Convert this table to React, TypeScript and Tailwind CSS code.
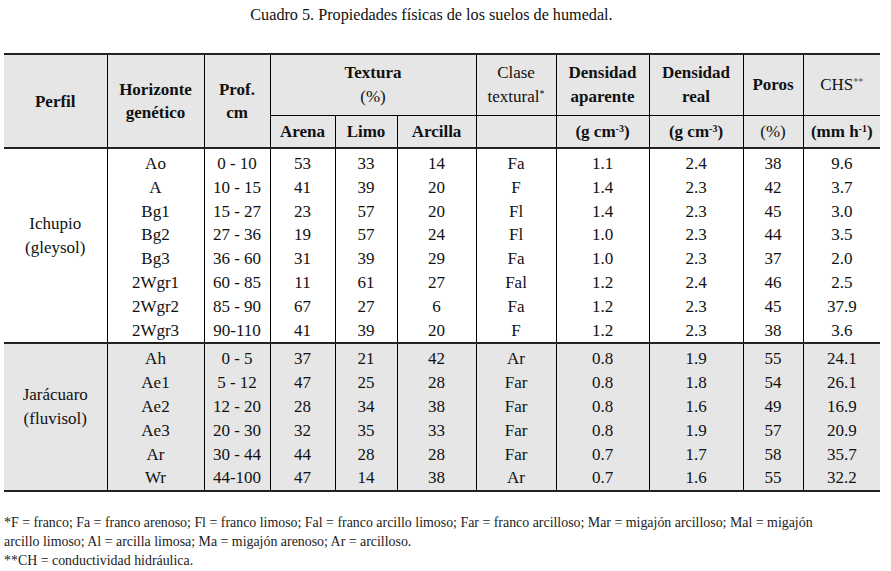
import React from 'react'

type Row = [string, string, string, string, string, string, string, string, string, string]

const ichupio: Row[] = [
  ['Ao', '0 - 10', '53', '33', '14', 'Fa', '1.1', '2.4', '38', '9.6'],
  ['A', '10 - 15', '41', '39', '20', 'F', '1.4', '2.3', '42', '3.7'],
  ['Bg1', '15 - 27', '23', '57', '20', 'Fl', '1.4', '2.3', '45', '3.0'],
  ['Bg2', '27 - 36', '19', '57', '24', 'Fl', '1.0', '2.3', '44', '3.5'],
  ['Bg3', '36 - 60', '31', '39', '29', 'Fa', '1.0', '2.3', '37', '2.0'],
  ['2Wgr1', '60 - 85', '11', '61', '27', 'Fal', '1.2', '2.4', '46', '2.5'],
  ['2Wgr2', '85 - 90', '67', '27', '6', 'Fa', '1.2', '2.3', '45', '37.9'],
  ['2Wgr3', '90-110', '41', '39', '20', 'F', '1.2', '2.3', '38', '3.6'],
]

const jaracuaro: Row[] = [
  ['Ah', '0 - 5', '37', '21', '42', 'Ar', '0.8', '1.9', '55', '24.1'],
  ['Ae1', '5 - 12', '47', '25', '28', 'Far', '0.8', '1.8', '54', '26.1'],
  ['Ae2', '12 - 20', '28', '34', '38', 'Far', '0.8', '1.6', '49', '16.9'],
  ['Ae3', '20 - 30', '32', '35', '33', 'Far', '0.8', '1.9', '57', '20.9'],
  ['Ar', '30 - 44', '44', '28', '28', 'Far', '0.7', '1.7', '58', '35.7'],
  ['Wr', '44-100', '47', '14', '38', 'Ar', '0.7', '1.6', '55', '32.2'],
]

const widths = [103, 97, 66, 65, 62, 79, 80, 93, 94, 60, 77]

function Group({ name, soil, rows, shaded }: { name: string; soil: string; rows: Row[]; shaded?: boolean }) {
  return (
    <>
      {rows.map((r, i) => (
        <tr key={r[0]} className={shaded ? 'bg-[#e6e6e7]' : ''}>
          {i === 0 && (
            <td rowSpan={rows.length} className="align-middle text-center leading-[24px] pb-[20px]">
              {name}
              <br />
              {soil}
            </td>
          )}
          {r.map((v, j) => (
            <td
              key={j}
              className={`border-l border-black text-center leading-[23.8px] p-0 ${i === 0 ? 'pt-[3px]' : ''}`}
            >
              {v}
            </td>
          ))}
        </tr>
      ))}
    </>
  )
}

export default function App() {
  return (
    <div className="w-[891px] h-[571px] bg-white text-[#111] font-['Liberation_Serif'] overflow-hidden">
      <div className="h-[53px] pt-[5px] pr-[28px] text-center text-[16.2px] leading-[20px]">
        Cuadro 5. Propiedades físicas de los suelos de humedal.
      </div>

      <table className="ml-[4px] w-[876px] table-fixed border-collapse text-[17px]">
        <colgroup>
          {widths.map((w, i) => (
            <col key={i} style={{ width: w }} />
          ))}
        </colgroup>
        <thead className="bg-[#e6e6e7] font-bold">
          <tr className="h-[61px] border-t-2 border-[#222]">
            <th rowSpan={2} className="align-middle leading-[23px] font-bold">
              Perfil
            </th>
            <th rowSpan={2} className="border-l border-black align-middle leading-[23px] font-bold">
              Horizonte
              <br />
              genético
            </th>
            <th rowSpan={2} className="border-l border-black align-middle leading-[23px] font-bold">
              Prof.
              <br />
              cm
            </th>
            <th colSpan={3} className="border-l border-black border-b align-middle leading-[24px] font-bold">
              Textura
              <br />
              <span className="font-normal">(%)</span>
            </th>
            <th className="border-l border-black border-b align-middle leading-[24px] font-normal">
              Clase
              <br />
              textural<sup className="text-[10px]">*</sup>
            </th>
            <th className="border-l border-black border-b align-middle leading-[24px] font-bold">
              Densidad
              <br />
              aparente
            </th>
            <th className="border-l border-black border-b align-middle leading-[24px] font-bold">
              Densidad
              <br />
              real
            </th>
            <th className="border-l border-black border-b align-middle font-bold">Poros</th>
            <th className="border-l border-black border-b align-middle font-normal">
              CHS<sup className="text-[10px] text-[#555]">**</sup>
            </th>
          </tr>
          <tr className="h-[33px]">
            <th className="border-l border-black font-bold">Arena</th>
            <th className="border-l border-black font-bold">Limo</th>
            <th className="border-l border-black font-bold">Arcilla</th>
            <th className="border-l border-black"></th>
            <th className="border-l border-black font-bold">
              (g cm<sup className="text-[10px]">-3</sup>)
            </th>
            <th className="border-l border-black font-bold">
              (g cm<sup className="text-[10px]">-3</sup>)
            </th>
            <th className="border-l border-black font-normal">(%)</th>
            <th className="border-l border-black font-bold">
              (mm h<sup className="text-[10px]">-1</sup>)
            </th>
          </tr>
        </thead>
        <tbody className="border-t-2 border-[#222]">
          <Group name="Ichupio" soil="(gleysol)" rows={ichupio} />
        </tbody>
        <tbody className="border-t-2 border-b-2 border-[#222]">
          <Group name="Jarácuaro" soil="(fluvisol)" rows={jaracuaro} shaded />
        </tbody>
      </table>

      <div className="mt-[21px] ml-[4px] text-[13.9px] leading-[19px] text-[#222]">
        <p>
          *F = franco; Fa = franco arenoso; Fl = franco limoso; Fal = franco arcillo limoso; Far = franco arcilloso; Mar =
          migajón arcilloso; Mal = migajón
        </p>
        <p>arcillo limoso; Al = arcilla limosa; Ma = migajón arenoso; Ar = arcilloso.</p>
        <p>**CH = conductividad hidráulica.</p>
      </div>
    </div>
  )
}
